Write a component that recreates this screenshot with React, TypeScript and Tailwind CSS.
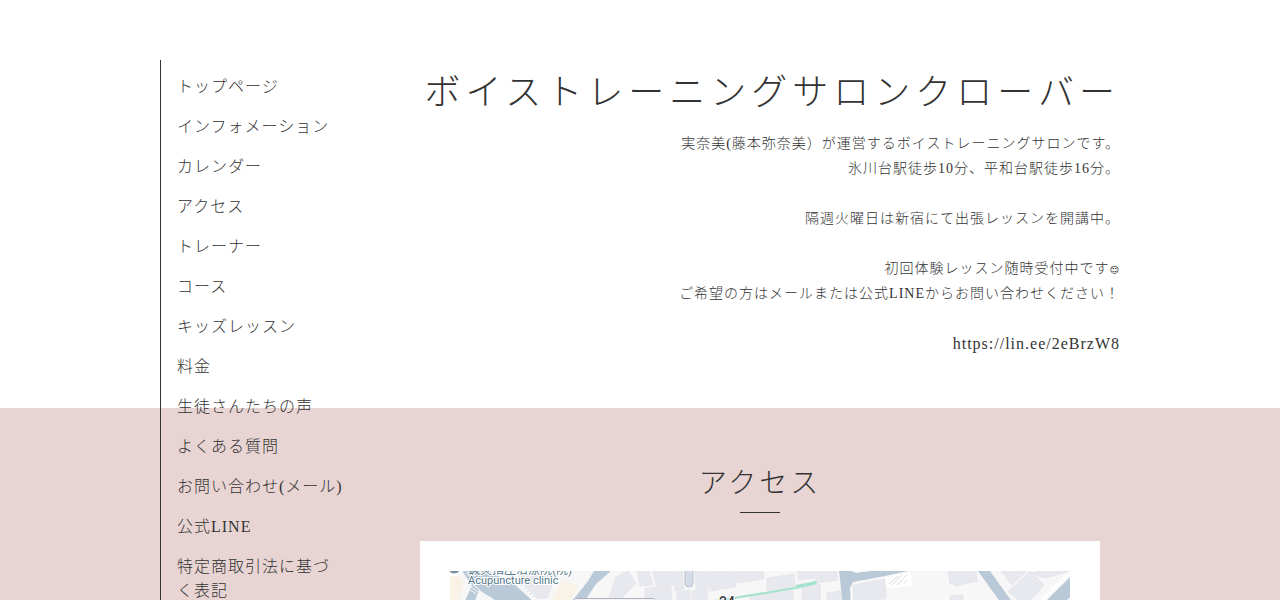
const navItems = [
  "トップページ",
  "インフォメーション",
  "カレンダー",
  "アクセス",
  "トレーナー",
  "コース",
  "キッズレッスン",
  "料金",
  "生徒さんたちの声",
  "よくある質問",
  "お問い合わせ(メール)",
  "公式LINE",
  "特定商取引法に基づく表記",
];

function Sidebar() {
  return (
    <nav className="w-[184px] border-l border-[#333] pt-[7px] pl-4">
      <ul>
        {navItems.map((label) => (
          <li key={label}>
            <a href="#" className="block py-2 text-base leading-6 tracking-[1px] hover:opacity-70">
              {label}
            </a>
          </li>
        ))}
      </ul>
    </nav>
  );
}

function SiteHeader() {
  return (
    <header className="text-right">
      <h1 className="text-4xl leading-[66px] tracking-[5px] whitespace-nowrap">
        ボイストレーニングサロンクローバー
      </h1>
      <div className="mt-[5px] text-sm leading-[25px] tracking-[1px]">
        <p>実奈美(藤本弥奈美）が運営するボイストレーニングサロンです。</p>
        <p>氷川台駅徒歩10分、平和台駅徒歩16分。</p>
        <br />
        <p>隔週火曜日は新宿にて出張レッスンを開講中。</p>
        <br />
        <p>
          初回体験レッスン随時受付中です
          <span className="font-['DejaVu_Sans',sans-serif] text-[9px] leading-none font-bold text-black">☺</span>
        </p>
        <p>ご希望の方はメールまたは公式LINEからお問い合わせください！</p>
        <br />
        <p className="text-base leading-[25px]">
          <a href="https://lin.ee/2eBrzW8">https://lin.ee/2eBrzW8</a>
        </p>
      </div>
    </header>
  );
}

const buildings = [
  "70,0 108,0 97,27 84,27 66,10",
  "166,6 178,0 186,12 170,29 158,29",
  "187,0 199,0 203,14 190,15",
  "203,0 222,0 223,14 206,15",
  "223,0 232,0 234,18 225,20",
  "245,0 254,0 257,17 246,19",
  "255,0 285,0 286,16 259,20",
  "286,0 313,0 314,8 287,12",
  "317,7 344,3 345,16 317,20",
  "348,0 364,0 364,7 348,9",
  "365,0 387,0 387,9 366,12",
  "352,16 370,13 371,50 352,50",
  "377,22 391,20 394,50 377,50",
  "300,24 343,20 343,50 300,50",
  "195,17 221,15 222,50 195,50",
  "227,21 240,19 240,50 227,50",
  "242,20 257,18 259,50 242,50",
  "403,14 435,8 436,27 404,40",
  "498,0 526,0 527,10 505,15 504,13 500,13",
  "500,25 513,24 514,50 500,50",
  "551,0 577,0 562,14",
  "580,0 594,14 576,34 558,21",
  "582,2 590,0 620,0 603,5 593,7",
];

function AccessMap() {
  return (
    <svg
      viewBox="0 0 620 60"
      className="block w-full bg-[#f7f7f7]"
      role="img"
      aria-label="アクセス"
    >
      <polygon points="0,0 6,0 14,12 8,40 0,50" fill="#f8f3e6" />
      <polygon points="112,9 129,15 117,36 98,36" fill="#f8f3e6" />
      <g fill="#e8e9ee" stroke="#dfe0e7" strokeWidth="0.6">
        {buildings.map((points) => (
          <polygon key={points} points={points} />
        ))}
      </g>

      {/* roads */}
      <g fill="#b9c9d8">
        <polygon points="12,0 38,0 63,12 86,33 108,60 66,60 45,29 29,19 24,32 12,60 2,60 22,14" />
        <polygon points="144,0 161,0 146,13 128,40 114,60 100,60 123,29 138,10" />
        <polygon points="389,0 458,0 435,5 403,11 400,17 402,60 396,60" />
        <polygon points="528,0 540,0 583,60 571,60" />
        <polygon points="620,6 620,26 586,60 566,60 597,29" />
      </g>
      <path d="M19 18l7 5M21 16l7 5M23 14l7 5" stroke="#fff" strokeWidth="1" />
      <path d="M70 12l26 27" stroke="#fff" strokeWidth="2" strokeDasharray="2 2" />
      <path d="M590 31l30-29" stroke="#fff" strokeWidth="4" strokeDasharray="3 1" />
      <path d="M401 0h20l-15 2z" fill="#f7f7f7" />
      <circle cx="4" cy="-5" r="9" fill="#7892a3" stroke="#fff" strokeWidth="3" />
      <path d="M235 0v12a4 4 0 0 0 8 0V0" fill="#d6dce7" stroke="#b9c3d3" />

      <path d="M435 6l26-5 1 12-2 2-22 2-2-2z" fill="#fff" />
      <path d="M439 13l9-8M442 14l10-10M447 14l10-10M454 12l3-3" stroke="#d8dae0" strokeWidth="1" />

      {/* walking route */}
      <path d="M265 30l81-13" stroke="#a3e3cd" strokeWidth="2" />
      <polygon points="346,14 366,10 367,13 346,18" fill="#a3e3cd" />

      <path d="M124.5 60V28.5q0-1 1-1h78q1 0 1 1V60z" fill="#f5f5f7" stroke="#aeb1bb" />
      <g
        stroke="#fff"
        strokeWidth="2"
        style={{ paintOrder: "stroke" }}
        className="font-['Roboto','Noto_Sans_CJK_JP',sans-serif] font-normal"
      >
        <text x="18" y="3" fontSize="12" fill="#55788a">
          鍼灸指圧治療院(院)
        </text>
        <text x="18" y="13" fontSize="11" fill="#55788a">
          Acupuncture clinic
        </text>
        <text x="269" y="36" fontSize="14" fontWeight="500" fill="#3c4043">
          24
        </text>
      </g>
    </svg>
  );
}

function AccessSection() {
  return (
    <section className="pr-5">
      <h2 className="text-center text-[28px] leading-10 tracking-[3px]">アクセス</h2>
      <div className="mx-auto mt-2 w-10 border-t border-[#333]" />
      <div className="mt-7 bg-white p-[30px]">
        <AccessMap />
      </div>
    </section>
  );
}

export default function App() {
  return (
    <div className="grid min-h-screen bg-white font-['Liberation_Serif','Noto_Sans_CJK_JP',serif] font-light text-[#333]">
      {/* the menu shares one grid cell with the page, so it runs over both bands */}
      <div className="pointer-events-none z-10 col-start-1 row-start-1 mx-auto flex w-full max-w-[960px] pt-[60px]">
        <div className="pointer-events-auto flex">
          <Sidebar />
        </div>
      </div>
      <main className="col-start-1 row-start-1 flex flex-col">
        <div className="mx-auto w-full max-w-[960px] pt-[60px] pb-[52px] pl-[260px]">
          <SiteHeader />
        </div>
        <div className="grow bg-[#e8d5d3] pt-[56px]">
          <div className="mx-auto w-full max-w-[960px] pl-[260px]">
            <AccessSection />
          </div>
        </div>
      </main>
    </div>
  );
}
